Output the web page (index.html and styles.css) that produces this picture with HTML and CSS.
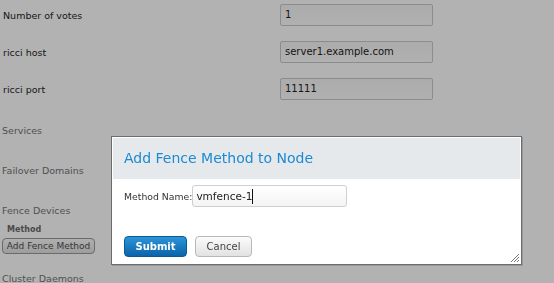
FILE: index.html
```html
<html>
<head>
   <meta charset="UTF-8">
   <title>Cluster Node</title>

   <link rel="stylesheet" href="styles.css">
</head>
<body>

	<div class="page">
		<div class="props">
			<label class="prop_label">Number of votes</label>
			<div class="prop_input">1</div>
			<label class="prop_label">ricci host</label>
			<div class="prop_input">server1.example.com</div>
			<label class="prop_label">ricci port</label>
			<div class="prop_input">11111</div>
		</div>

		<div class="section section_first">Services</div>
		<div class="section">Failover Domains</div>
		<div class="section">Fence Devices</div>
		<div class="method_title">Method</div>
		<button class="btn_small">Add Fence Method</button>
		<div class="section section_last">Cluster Daemons</div>
	</div>

	<div class="overlay"></div>

	<div class="dialog">
		<div class="dialog_head">Add Fence Method to Node</div>
		<div class="dialog_body">
			<div class="form_row">
				<span class="form_label">Method Name:</span>
				<div class="form_input">vmfence-1<span class="caret"></span></div>
			</div>
			<div class="form_buttons">
				<button class="btn btn_primary">Submit</button>
				<button class="btn btn_cancel">Cancel</button>
			</div>
		</div>
		<svg class="grip" width="10" height="10" viewBox="0 0 10 10">
			<path d="M9 1 L1 9 M9 4 L4 9 M9 7 L7 9" stroke="#777" stroke-width="1" fill="none"/>
		</svg>
	</div>

</body>
</html>
```

FILE: styles.css
```css
body{
	margin: 0;
	background: #ffffff;
	font-family: "DejaVu Sans", sans-serif;
	font-size: 9.5px;
	color: #252525;
	overflow: hidden;
}
.page{
	padding: 4px 0 0 3px;
}
.props{
	display: grid;
	grid-template-columns: 277px 153px;
	grid-auto-rows: 22px;
	row-gap: 15px;
	align-items: center;
}
.prop_input{
	box-sizing: border-box;
	height: 22px;
	border: 1px solid #c9c9c9;
	border-radius: 2px;
	background: linear-gradient(#f6f6f6, #fdfdfd);
	padding: 0 4px;
	line-height: 20px;
	font-size: 10px;
	color: #222;
}
.section{
	line-height: 20px;
	margin-bottom: 20px;
	color: #747474;
	margin-left: -1px;
}
.section_first{
	margin-top: 21px;
}
.method_title{
	margin-top: -17px;
	margin-left: 4px;
	line-height: 12px;
	font-size: 8px;
	font-weight: bold;
	color: #6a6a6a;
}
.btn_small{
	display: block;
	margin: 2px 0 0 -1px;
	width: 93px;
	height: 16px;
	padding: 0;
	font-family: "DejaVu Sans", sans-serif;
	font-size: 9px;
	color: #505050;
	border: 1px solid #9a9a9a;
	border-radius: 4px;
	background: linear-gradient(#fafafa, #e2e2e2);
}
.section_last{
	margin-top: 15px;
}
.overlay{
	position: fixed;
	top: 0;
	left: 0;
	right: 0;
	bottom: 0;
	background: rgba(0, 0, 0, 0.3);
}
.dialog{
	position: absolute;
	left: 111px;
	top: 136px;
	width: 406px;
	height: 126px;
	border: 1px solid #6c6c6c;
	box-shadow: 1px 1px 0 #999;
	background: #ffffff;
	padding: 1px 2px 0 1px;
	box-sizing: content-box;
	display: flex;
	flex-direction: column;
}
.dialog_head{
	height: 41px;
	background: #e6e9ec;
	color: #1b8ad2;
	font-size: 14px;
	line-height: 41px;
	padding-left: 11px;
	margin-right: -1px;
}
.dialog_body{
	padding: 6px 0 0 11px;
}
.form_row{
	display: flex;
	align-items: center;
	gap: 0;
}
.form_label{
	color: #333;
	font-size: 9.3px;
}
.form_input{
	box-sizing: border-box;
	width: 155px;
	height: 22px;
	border: 1px solid #cfcfcf;
	border-radius: 3px;
	background: linear-gradient(#ffffff, #f4f4f4);
	padding: 0 3px;
	line-height: 20px;
	font-size: 10.5px;
	color: #222;
}
.caret{
	display: inline-block;
	width: 0;
	height: 15px;
	border-left: 1px solid #111;
	vertical-align: -4px;
}
.form_buttons{
	display: flex;
	gap: 8px;
	margin-top: 29px;
}
.btn{
	height: 21px;
	border-radius: 4px;
	font-family: "DejaVu Sans", sans-serif;
	font-size: 10px;
	padding: 0;
}
.btn_primary{
	width: 63px;
	border: 1px solid #0b5a96;
	background: linear-gradient(#2c94d8, #0b64a9);
	color: #ffffff;
	font-weight: bold;
}
.btn_cancel{
	width: 57px;
	border: 1px solid #b8b8b8;
	background: linear-gradient(#fbfbfb, #e2e2e2);
	color: #444;
}
.grip{
	position: absolute;
	right: 1px;
	bottom: 1px;
}
```
